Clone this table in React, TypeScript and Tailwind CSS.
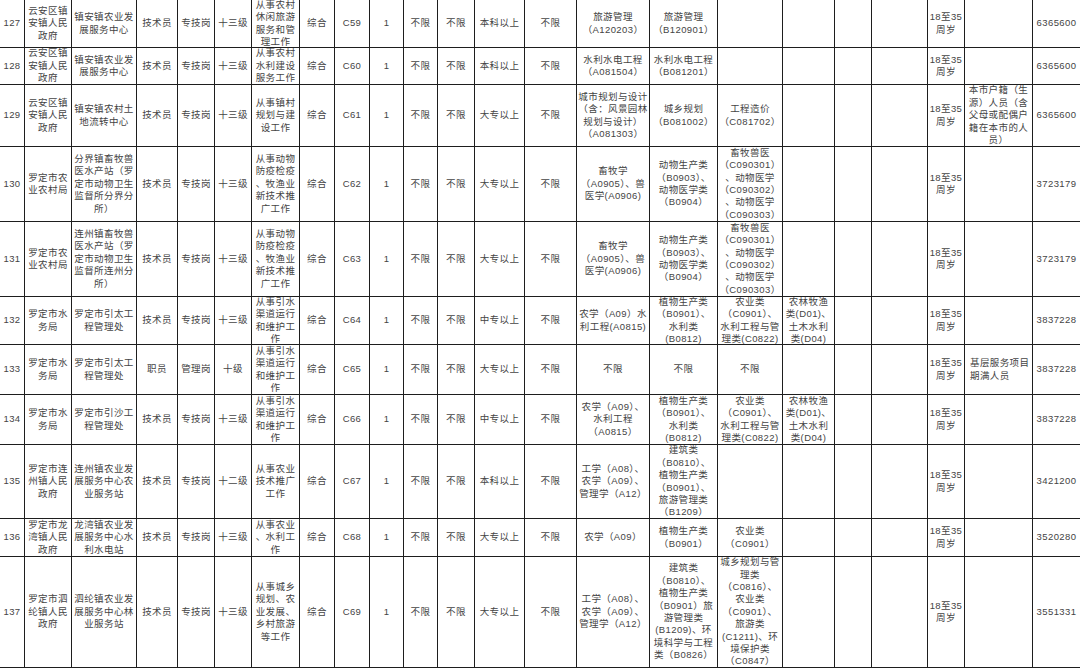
import React from "react";

const rows: string[][] = [
  ["127","云安区镇|安镇人民|政府","镇安镇农业发|展服务中心","技术员","专技岗","十三级","从事农村|休闲旅游|服务和管|理工作","综合","C59","1","不限","不限","本科以上","不限","旅游管理|（A120203）","旅游管理|（B120901）","","","","","18至35|周岁","","6365600"],
  ["128","云安区镇|安镇人民|政府","镇安镇农业发|展服务中心","技术员","专技岗","十三级","从事农村|水利建设|服务工作","综合","C60","1","不限","不限","本科以上","不限","水利水电工程|（A081504）","水利水电工程|（B081201）","","","","","18至35|周岁","","6365600"],
  ["129","云安区镇|安镇人民|政府","镇安镇农村土|地流转中心","技术员","专技岗","十三级","从事镇村|规划与建|设工作","综合","C61","1","不限","不限","大专以上","不限","城市规划与设计|（含：风景园林|规划与设计）|（A081303）","城乡规划|（B081002）","工程造价|（C081702）","","","","18至35|周岁","本市户籍（生|源）人员（含|父母或配偶户|籍在本市的人|员）","6365600"],
  ["130","罗定市农|业农村局","分界镇畜牧兽|医水产站（罗|定市动物卫生|监督所分界分|所）","技术员","专技岗","十三级","从事动物|防疫检疫|、牧渔业|新技术推|广工作","综合","C62","1","不限","不限","大专以上","不限","畜牧学|（A0905）、兽|医学(A0906)","动物生产类|（B0903）、|动物医学类|（B0904）","畜牧兽医|（C090301）|、动物医学|（C090302）|、动物医学|（C090303）","","","","18至35|周岁","","3723179"],
  ["131","罗定市农|业农村局","连州镇畜牧兽|医水产站（罗|定市动物卫生|监督所连州分|所）","技术员","专技岗","十三级","从事动物|防疫检疫|、牧渔业|新技术推|广工作","综合","C63","1","不限","不限","大专以上","不限","畜牧学|（A0905）、兽|医学(A0906)","动物生产类|（B0903）、|动物医学类|（B0904）","畜牧兽医|（C090301）|、动物医学|（C090302）|、动物医学|（C090303）","","","","18至35|周岁","","3723179"],
  ["132","罗定市水|务局","罗定市引太工|程管理处","技术员","专技岗","十三级","从事引水|渠道运行|和维护工|作","综合","C64","1","不限","不限","中专以上","不限","农学（A09）水|利工程(A0815)","植物生产类|（B0901）、|水利类|(B0812)","农业类|（C0901）、|水利工程与管|理类(C0822)","农林牧渔|类(D01)、|土木水利|类(D04)","","","18至35|周岁","","3837228"],
  ["133","罗定市水|务局","罗定市引太工|程管理处","职员","管理岗","十级","从事引水|渠道运行|和维护工|作","综合","C65","1","不限","不限","大专以上","不限","不限","不限","不限","","","","18至35|周岁","基层服务项目|期满人员","3837228"],
  ["134","罗定市水|务局","罗定市引沙工|程管理处","技术员","专技岗","十三级","从事引水|渠道运行|和维护工|作","综合","C66","1","不限","不限","中专以上","不限","农学（A09）、|水利工程|（A0815）","植物生产类|（B0901）、|水利类|(B0812)","农业类|（C0901）、|水利工程与管|理类(C0822)","农林牧渔|类(D01)、|土木水利|类(D04)","","","18至35|周岁","","3837228"],
  ["135","罗定市连|州镇人民|政府","连州镇农业发|展服务中心农|业服务站","技术员","专技岗","十二级","从事农业|技术推广|工作","综合","C67","1","不限","不限","本科以上","不限","工学（A08）、|农学（A09）、|管理学（A12）","建筑类|（B0810）、|植物生产类|（B0901）、|旅游管理类|（B1209）","","","","","18至35|周岁","","3421200"],
  ["136","罗定市龙|湾镇人民|政府","龙湾镇农业发|展服务中心水|利水电站","技术员","专技岗","十三级","从事农业|、水利工|作","综合","C68","1","不限","不限","大专以上","不限","农学（A09）","植物生产类|（B0901）","农业类|（C0901）","","","","18至35|周岁","","3520280"],
  ["137","罗定市泗|纶镇人民|政府","泗纶镇农业发|展服务中心林|业服务站","技术员","专技岗","十三级","从事城乡|规划、农|业发展、|乡村旅游|等工作","综合","C69","1","不限","不限","大专以上","不限","工学（A08）、|农学（A09）、|管理学（A12）","建筑类|（B0810）、|植物生产类|（B0901）旅|游管理类|(B1209)、环|境科学与工程|类（B0826）","城乡规划与管|理类|（C0816）、|农业类|（C0901）、|旅游类|(C1211)、环|境保护类|（C0847）","","","","18至35|周岁","","3551331"],
];

export default function App() {
  return (
    <div className="w-[1080px] h-[669px] overflow-hidden bg-white">
      <div className="grid grid-cols-[25px_47px_65px_41px_37px_37px_48px_35px_35px_34px_34px_37px_50px_52px_73px_68px_65px_52px_37px_56px_37px_68px_47px] grid-rows-[48px_37px_62px_75px_75px_48px_50px_50px_74px_38px_111px] font-['Liberation_Sans','Noto_Sans_CJK_SC',sans-serif] text-[9.5px] leading-[12.4px] tracking-[0.4px] text-[#444]">
        {rows.map((row, ri) =>
          row.map((cell, ci) => (
            <div
              key={ri + "-" + ci}
              className={
                "flex flex-col justify-center border-b border-[#1e1e1e] " +
                (ci === 21 && ri === 6 ? "items-start text-left pl-[5px] " : "items-center text-center ") +
                (ci === 22 ? "border-r-0" : "border-r")
              }
            >
              {cell.split("|").map((line, li) =>
                line ? (
                  <span key={li} className="block whitespace-nowrap">
                    {line}
                  </span>
                ) : null
              )}
            </div>
          ))
        )}
      </div>
    </div>
  );
}
